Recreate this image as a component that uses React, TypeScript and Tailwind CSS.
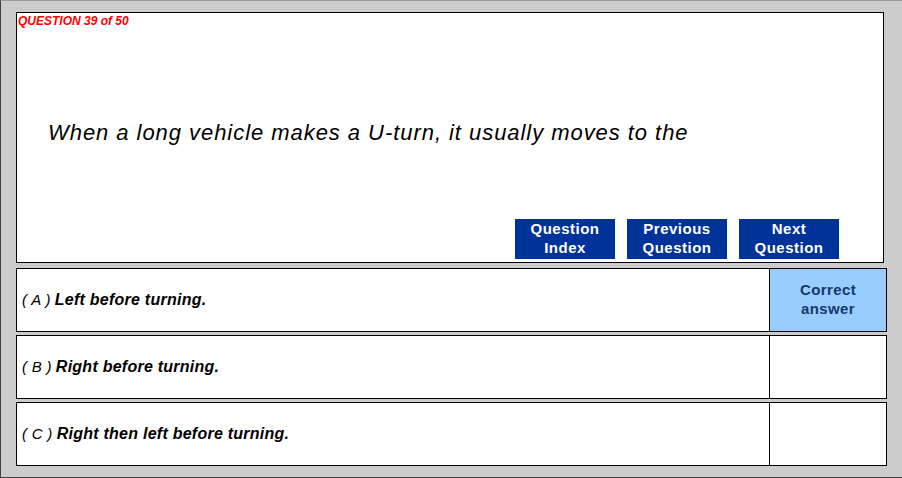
const answers = [
  { key: 'A', text: 'Left before turning.', correct: true },
  { key: 'B', text: 'Right before turning.', correct: false },
  { key: 'C', text: 'Right then left before turning.', correct: false },
]

const buttons = [
  ['Question', 'Index'],
  ['Previous', 'Question'],
  ['Next', 'Question'],
]

export default function App() {
  return (
    <div className="w-[902px] h-[478px] bg-[#cccccc] border-t border-l border-b border-t-[#9a9a9a] border-l-[#404040] border-b-[#404040] pl-[15px] pt-[11px] font-['Liberation_Sans',Arial,sans-serif]">
      <div className="w-[868px] h-[251px] bg-white border border-black flex flex-col">
        <p className="pl-px pt-[2px] text-[12px] leading-[13px] font-bold italic text-[#ff0000]">QUESTION 39 of 50</p>
        <p className="pl-[31px] mt-[92px] text-[22px] leading-[26px] italic text-black tracking-[0.95px]">
          When a long vehicle makes a U-turn, it usually moves to the
        </p>
        <div className="mt-auto mb-[3px] pr-[44px] flex justify-end gap-3">
          {buttons.map((b) => (
            <div key={b.join()} className="w-[100px] h-[40px] pb-[3px] bg-[#003399] text-white font-bold text-[15px] leading-[19px] tracking-[0.5px] flex flex-col items-center justify-center">
              <span>{b[0]}</span>
              <span>{b[1]}</span>
            </div>
          ))}
        </div>
      </div>
      <div className="mt-[5px] flex flex-col gap-[3px]">
        {answers.map((a) => (
          <div key={a.key} className="w-[871px] h-[64px] bg-white border border-black flex">
            <div className="flex-1 flex items-center pl-[5px] text-black italic">
              <span className="text-[15px] font-normal mr-[4px] tracking-[0.3px]">( {a.key} )</span>
              <span className="text-[16px] font-bold tracking-[0.25px]">{a.text}</span>
            </div>
            <div className={`w-[117px] pb-[2px] border-l border-black flex flex-col items-center justify-center text-[15px] leading-[19px] font-bold tracking-[0.4px] text-[#15396b] ${a.correct ? 'bg-[#99ccff]' : 'bg-white'}`}>
              {a.correct && (
                <>
                  <span>Correct</span>
                  <span>answer</span>
                </>
              )}
            </div>
          </div>
        ))}
      </div>
    </div>
  )
}
